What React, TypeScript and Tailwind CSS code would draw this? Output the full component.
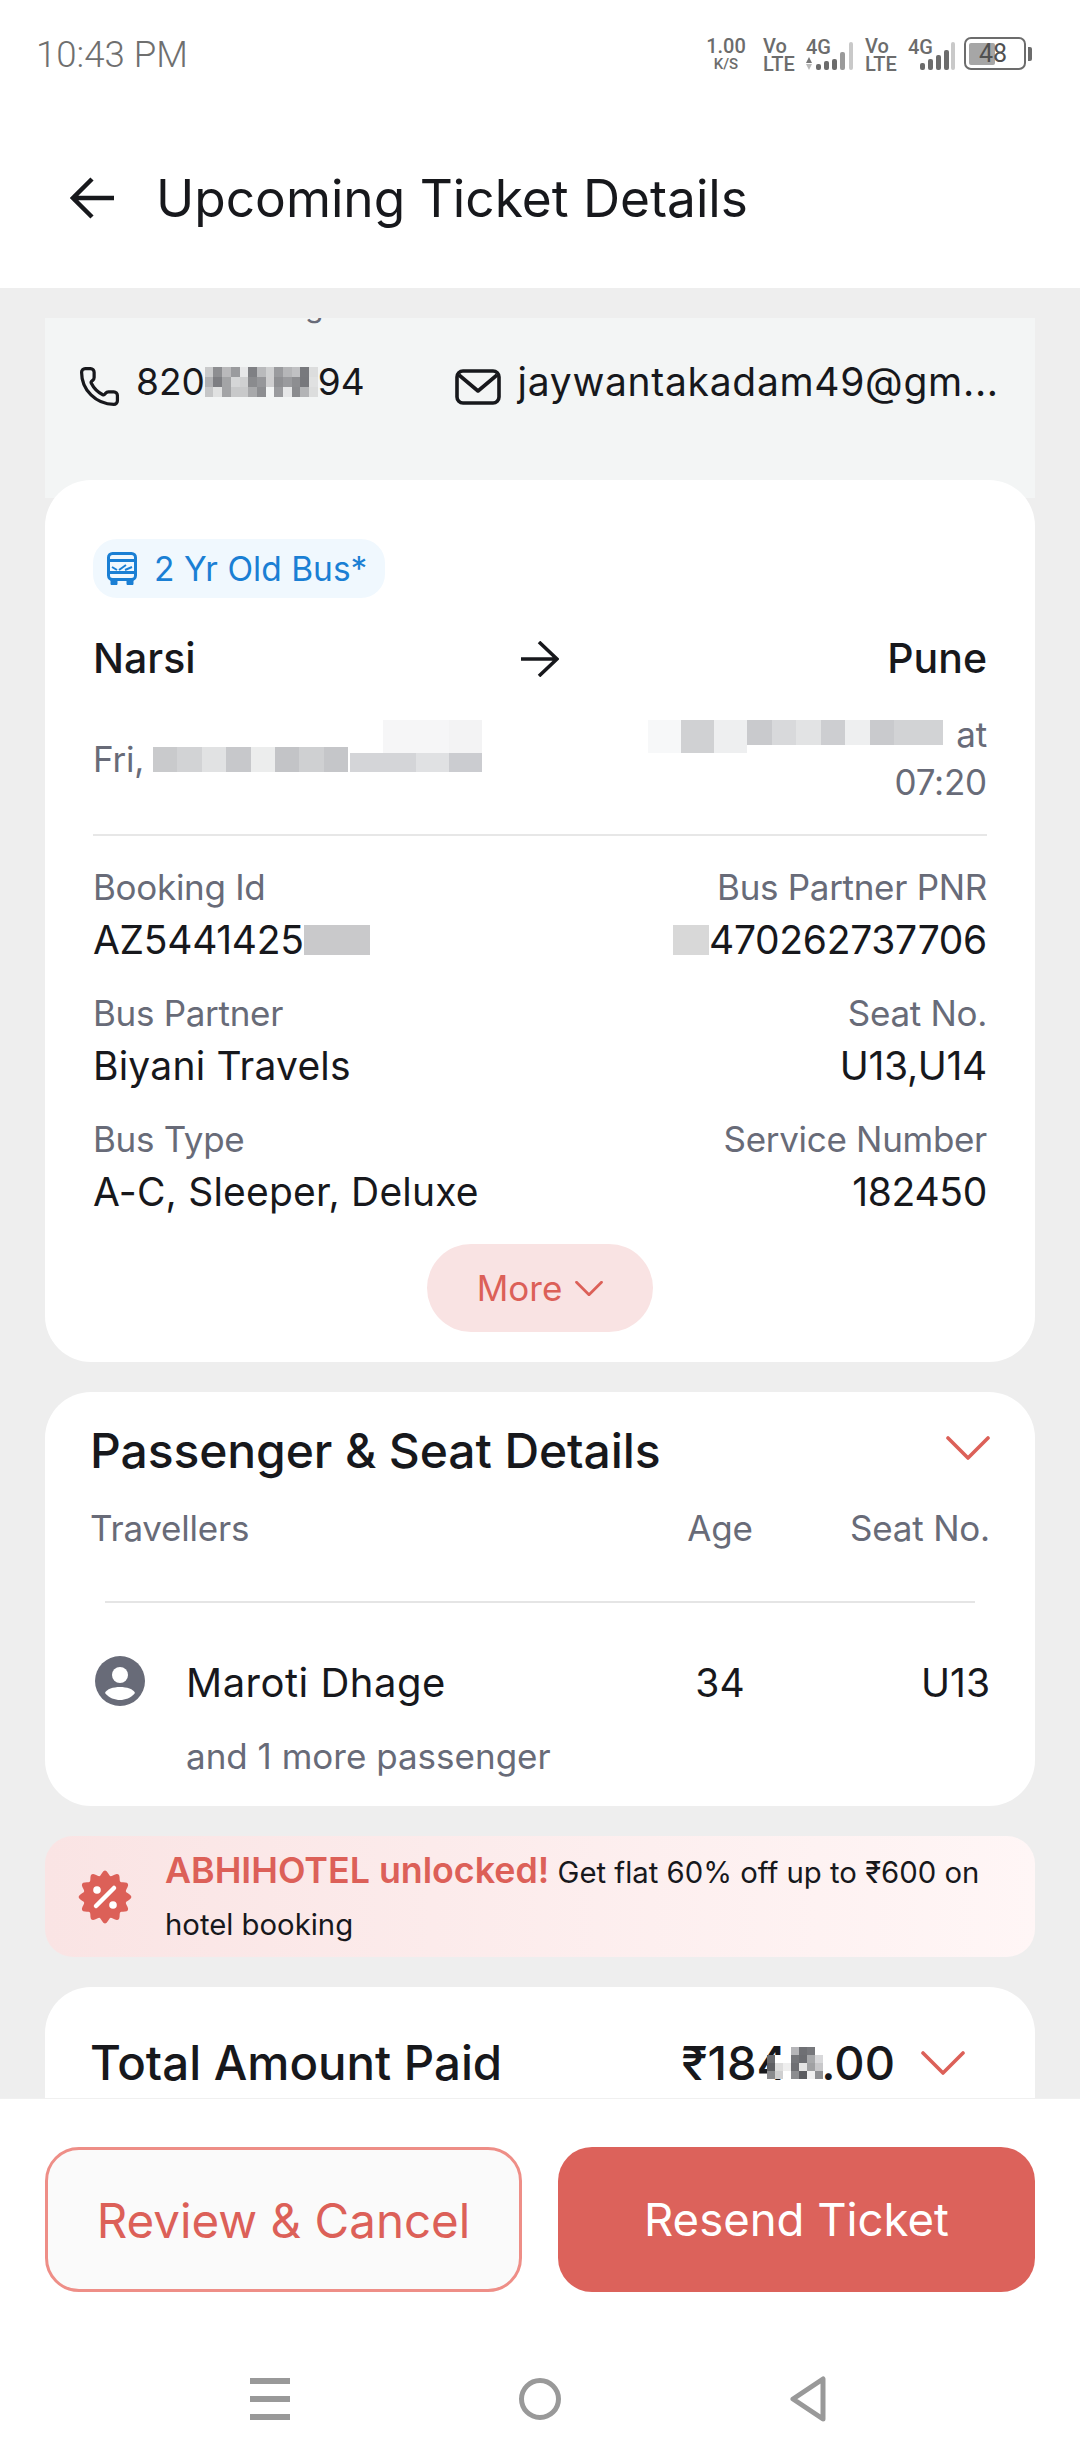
import React from "react";
import { Phone } from "lucide-react";

const F = "[font-family:Inter,'Noto_Sans',sans-serif]";

function Mosaic({ colors, rows, w, h }: { colors: string[]; rows: number; w: number; h: number }) {
  return (
    <span className="grid shrink-0" style={{ gridTemplateColumns: `repeat(${colors.length / rows}, ${w}px)` }}>
      {colors.map((c, i) => (
        <span key={i} style={{ backgroundColor: c, height: h }} />
      ))}
    </span>
  );
}

function Info({ label, value, right, extra, tight }: { label: string; value: React.ReactNode; right?: boolean; extra?: React.ReactNode; tight?: boolean }) {
  return (
    <div className={right ? "flex flex-col items-end" : "flex flex-col"}>
      <div className="h-[52px] text-[35px] leading-[50px] text-[#686b78] tracking-[-0.3px]">{label}</div>
      <div className={`h-[52px] text-[39px] leading-[52px] text-[#17181c] flex items-center ${tight ? "tracking-[-0.3px]" : "tracking-[0.2px]"}`}>
        {extra}
        {value}
      </div>
    </div>
  );
}

function Chevron({ className, sw = 3.6 }: { className: string; sw?: number }) {
  return (
    <svg viewBox="0 0 44 24" className={className} fill="none" stroke="#dc6058" strokeWidth={sw} strokeLinecap="round" strokeLinejoin="round">
      <path d="M2 2 L22 22 L42 2" />
    </svg>
  );
}

function scallop(): string {
  const pts: string[] = [];
  for (let i = 0; i < 120; i++) {
    const t = (i / 120) * Math.PI * 2;
    const r = 24 + 2.4 * Math.cos(12 * t);
    pts.push(`${(27 + r * Math.sin(t)).toFixed(2)} ${(27 - r * Math.cos(t)).toFixed(2)}`);
  }
  return "M" + pts.join(" L") + " Z";
}

function Signal({ first }: { first?: boolean }) {
  const bars = first ? [6, 9, 11, 18] : [7, 11, 15, 20];
  return (
    <div className="w-[47px] h-[33px] relative">
      <span className="absolute left-0 top-0 text-[20px] leading-[20px]">4G</span>
      {first && (
        <span className="absolute left-0 bottom-0 flex flex-col items-center gap-[1px]">
          <span className="w-0 h-0 border-x-[3.5px] border-x-transparent border-b-[6px] border-b-[#777]" />
          <span className="w-0 h-0 border-x-[3.5px] border-x-transparent border-t-[6px] border-t-[#bbb]" />
        </span>
      )}
      <div className={`absolute bottom-0 flex items-end gap-[3.5px] ${first ? "left-[10px]" : "left-[12px]"}`}>
        {bars.map((h, i) => (
          <span key={i} className={`w-[4.5px] rounded-[2px] ${first && i === 3 ? "bg-[#9a9a9a]" : "bg-[#6c6c6c]"}`} style={{ height: h }} />
        ))}
      </div>
      <span className="absolute right-0 bottom-0 w-[4.5px] h-[28px] rounded-[2px] bg-[#c9c9c9]" />
    </div>
  );
}

const phoneBlur = [
  "#c9cacb","#8d8e91","#b9b9bb","#9a9b9e","#e6e7e8","#7f8084","#b9babc","#cfd0d1","#9a9b9e","#b5b6b8","#c0c1c3","#78797d","#dcdddd",
  "#b0b1b3","#7d7e82","#a3a4a6","#d5d6d7","#cfd0d1","#8a8b8e","#96979a","#cfcfd0","#8f9093","#9a9b9e","#8d8e91","#77787c","#e0e1e1",
  "#c5c6c7","#e0e1e1","#a3a4a6","#c8c9ca","#c8c9ca","#a8a9ab","#8d8e91","#f3f5f5","#9a9b9e","#e6e7e8","#8a8b8e","#b3b4b6","#dcdddd",
];

const totalBlur = [
  "transparent","transparent","transparent","#b5b5b8","#6f7074","#77787c","#ffffff",
  "#6a6b6f","#ffffff","#ffffff","#75767a","#6c6d71","#a8a9ab","#d8d8da",
  "#5e5f63","#dddddd","#eeeeee","#6e6f73","#e4e4e4","#a0a1a3","#c8c8ca",
  "#8a8b8e","#cfcfd0","#ffffff","#8c8d90","#5b5c60","#f0f0f0","#8f9093",
];

export default function App() {
  return (
    <div className={`w-[1080px] h-[2460px] flex flex-col bg-white overflow-hidden ${F}`}>
      {/* status bar */}
      <div className="h-[110px] flex items-start justify-between pl-[36px] pr-[48px] shrink-0">
        <div className="mt-[33px] text-[36.6px] leading-[44px] text-[#6f6f6f] font-['Roboto'] font-light">10:43 PM</div>
        <div className="mt-[37px] flex items-start text-[#6c6c6c] font-['Roboto'] font-medium">
          <div className="flex flex-col items-center w-[40px]">
            <span className="text-[20px] leading-[18px]">1.00</span>
            <span className="mt-[2px] text-[15px] leading-[15px]">K/S</span>
          </div>
          <div className="ml-[17px] w-[30px] flex flex-col text-[20px] leading-[18px]"><span>Vo</span><span>LTE</span></div>
          <div className="ml-[13px]"><Signal first /></div>
          <div className="ml-[12px] w-[30px] flex flex-col text-[20px] leading-[18px]"><span>Vo</span><span>LTE</span></div>
          <div className="ml-[13px]"><Signal /></div>
          <div className="flex items-center ml-[9px]">
            <div className="w-[62px] h-[33px] rounded-[7px] border-[2.5px] border-[#6c6c6c] flex items-center p-[3px] relative">
              <div className="w-[26px] h-[22px] bg-[#a6a6a6] rounded-[2px]" />
              <span className="absolute left-[13px] text-[25px] leading-[26px] font-normal text-[#505050]">48</span>
            </div>
            <div className="w-[4px] h-[14px] bg-[#6c6c6c] ml-[2px] rounded-r-[2px]" />
          </div>
        </div>
      </div>

      {/* header */}
      <div className="h-[178px] shrink-0 flex items-center pl-[70px] pb-[2px]">
        <svg viewBox="0 0 46 42" className="w-[46px] h-[42px]" fill="none" stroke="#17181c" strokeWidth="4.5">
          <path d="M44 21 H4 M22 2 L3 21 L22 40" />
        </svg>
        <div className="ml-[40px] text-[51.4px] leading-[60px] text-[#17181c]">Upcoming Ticket Details</div>
      </div>

      {/* scroll area */}
      <div className="flex-1 min-h-0 overflow-hidden bg-[#eeeeee] px-[45px] pt-[30px]">
        <div className="bg-[#f3f5f5] h-[180px] overflow-hidden">
          <div className="h-[8px] overflow-hidden relative">
            <span className="absolute left-[260px] top-[-27px] text-[30px] leading-[30px] text-[#686b78]">g</span>
          </div>
          <div className="flex items-center mt-[31px] h-[50px] pl-[33px]">
            <Phone className="w-[43px] h-[43px] mt-[8px] text-[#17181c]" strokeWidth={1.8} />
            <span className="ml-[15px] text-[37px] leading-[50px] text-[#17181c] flex items-center">
              820
              <Mosaic colors={phoneBlur} rows={3} w={8.7} h={10} />
              94
            </span>
            <svg viewBox="0 0 46 36" className="w-[46px] h-[36px] ml-[90px] mt-[9px]" fill="none" stroke="#17181c" strokeWidth="3.6" strokeLinejoin="round">
              <rect x="2" y="2" width="42" height="32" rx="6" />
              <path d="M4 6 L23 22 L42 6" />
            </svg>
            <span className="ml-[17px] text-[39px] leading-[50px] text-[#17181c] tracking-[0.7px]">jaywantakadam49@gm...</span>
          </div>
        </div>

        {/* trip card */}
        <div className="bg-white rounded-[46px] h-[882px] -mt-[18px] px-[48px] pt-[59px]">
          <div className="flex w-[292px] items-center h-[59px] rounded-[24px] bg-[#f0f8fe] pl-[14px]">
            <svg viewBox="0 0 30 34" className="w-[30px] h-[34px] shrink-0" fill="none" stroke="#1a7fd4" strokeWidth="3" strokeLinejoin="round">
              <rect x="1.5" y="1.5" width="27" height="26" rx="4" />
              <path d="M1.5 8.5 H28.5 M1.5 20.5 H28.5" />
              <path d="M5 15 L10 18 M12 18 L19 13 M18 18 L25 15" strokeWidth="2" />
              <path d="M4 28 V32.5 H10 V28 M20 28 V32.5 H26 V28" fill="#1a7fd4" strokeWidth="1" />
            </svg>
            <span className="ml-[17px] text-[33.5px] leading-[44px] text-[#1a7fd4] tracking-[0.02px] whitespace-nowrap">2 Yr Old Bus*</span>
          </div>
          <div className="grid grid-cols-3 items-center mt-[30px] h-[50px]">
            <span className="text-[41px] font-medium text-[#17181c]">Narsi</span>
            <span className="flex justify-center">
              <svg viewBox="0 0 38 36" className="w-[38px] h-[36px]" fill="none" stroke="#17181c" strokeWidth="3.6">
                <path d="M0 18 H36 M18 1 L36 18 L18 35" />
              </svg>
            </span>
            <span className="text-right text-[41px] font-medium text-[#17181c]">Pune</span>
          </div>
          <div className="flex justify-between h-[158px] text-[35px] leading-[48px] text-[#686b78] border-b-2 border-[#e7e7e7] tracking-[-0.2px]">
            <div className="relative pt-[57px]">
              <span>Fri,</span>
              <span className="absolute left-[60px] top-[69px] flex">
                <Mosaic rows={1} w={24.4} h={25} colors={["#c9cacc","#d2d3d5","#e1e2e3","#c7c8cb","#eceded","#c3c4c7","#cfd0d2","#c5c6c9"]} />
              </span>
              <span className="absolute left-[257px] top-[75px] flex">
                <Mosaic rows={1} w={33} h={19} colors={["#d4d5d8","#d4d5d8","#e0e1e3","#cbccd0"]} />
              </span>
              <span className="absolute left-[290px] top-[42px] flex">
                <Mosaic rows={1} w={33} h={33} colors={["#f6f6f7","#f6f6f7","#f3f3f4"]} />
              </span>
            </div>
            <div className="flex flex-col items-end pt-[32px]">
              <div className="flex items-start">
                <span className="flex items-start mt-[10px]">
                  <Mosaic rows={1} w={33} h={33} colors={["#f7f8f9","#d0d1d3","#eeeff0"]} />
                  <Mosaic rows={1} w={24.5} h={25} colors={["#c9cacd","#d8d9db","#e2e3e4","#cdced1","#eeeff0","#c9cacd","#d2d3d5","#d2d3d5"]} />
                </span>
                <span className="ml-[13px]">at</span>
              </div>
              <span>07:20</span>
            </div>
          </div>
          <div className="grid grid-cols-2 gap-y-[22px] mt-[26px]">
            <Info tight label="Booking Id" value={<span className="flex items-center">AZ5441425<span className="inline-block w-[66px] h-[30px] bg-[#c9c9cb]" /></span>} />
            <Info tight right label="Bus Partner PNR" value="470262737706" extra={<span className="inline-block w-[36px] h-[30px] bg-[#d8d8d8]" />} />
            <Info label="Bus Partner" value="Biyani Travels" />
            <Info tight right label="Seat No." value="U13,U14" />
            <Info label="Bus Type" value="A-C, Sleeper, Deluxe" />
            <Info tight right label="Service Number" value="182450" />
          </div>
          <div className="flex justify-center mt-[26px]">
            <div className="w-[226px] h-[88px] rounded-[44px] bg-[#f9e3e3] flex items-center justify-center gap-[13px]">
              <span className="text-[35px] text-[#dc6058]">More</span>
              <Chevron className="w-[28px] h-[15px]" sw={4.4} />
            </div>
          </div>
        </div>

        {/* passenger card */}
        <div className="bg-white rounded-[46px] h-[414px] mt-[30px] px-[45px] pt-[31px]">
          <div className="flex items-center justify-between h-[56px]">
            <span className="text-[48px] font-medium text-[#17181c] whitespace-nowrap tracking-[-0.1px]">Passenger &amp; Seat Details</span>
            <Chevron className="w-[44px] h-[24px] -mt-[6px]" />
          </div>
          <div className="flex items-center h-[50px] mt-[24px] text-[35px] text-[#686b78] tracking-[-0.2px]">
            <span className="flex-1">Travellers</span>
            <span className="w-[66px] text-center">Age</span>
            <span className="w-[237px] text-right">Seat No.</span>
          </div>
          <div className="h-[2px] bg-[#e5e5e5] mx-[15px] mt-[48px]" />
          <div className="flex items-center h-[50px] mt-[55px] text-[39px] text-[#17181c]">
            <svg viewBox="0 0 50 50" className="w-[50px] h-[50px] ml-[5px] -mt-[4px]">
              <circle cx="25" cy="25" r="25" fill="#686b78" />
              <circle cx="25" cy="19" r="8" fill="#fff" />
              <path d="M10 37 C13 29 37 29 40 37 C36 42 30 44 25 44 C20 44 14 42 10 37 Z" fill="#fff" />
            </svg>
            <span className="flex-1 ml-[41px] text-[40px] tracking-[0.5px]">Maroti Dhage</span>
            <span className="w-[66px] text-center">34</span>
            <span className="w-[237px] text-right">U13</span>
          </div>
          <div className="ml-[96px] mt-[23px] text-[35px] leading-[50px] text-[#686b78]">and 1 more passenger</div>
        </div>

        {/* banner */}
        <div className="h-[121px] mt-[30px] rounded-[28px] bg-gradient-to-r from-[#fae4e4] to-[#fff6f6] flex items-center pl-[33px] pr-[30px]">
          <svg viewBox="0 0 54 54" className="w-[54px] h-[54px] shrink-0">
            <path fill="#dc6058" d={scallop()} />
            <path stroke="#fff" strokeWidth="4.5" strokeLinecap="round" d="M36 18 L18 36" />
            <circle cx="19" cy="20" r="3.8" fill="#fff" />
            <circle cx="35" cy="35" r="3.8" fill="#fff" />
          </svg>
          <div className="ml-[33px] pt-[1px] text-[29.3px] leading-[52px] text-[#17181c]">
            <span className="text-[35.8px] font-semibold text-[#dc6058]">ABHIHOTEL unlocked!</span> Get flat 60% off up to ₹600 on hotel booking
          </div>
        </div>

        {/* total card */}
        <div className="bg-white rounded-t-[46px] h-[140px] mt-[30px] pl-[45px] pr-[70px] pt-[48px]">
          <div className="flex items-center h-[56px]">
            <span className="flex-1 text-[47.4px] font-medium text-[#17181c]">Total Amount Paid</span>
            <span className="text-[47px] font-medium text-[#17181c] flex items-center">
              ₹184
              <span className="relative -ml-[20px] -mr-[2px] flex">
                <Mosaic colors={totalBlur} rows={4} w={8} h={8} />
              </span>
              .00
            </span>
            <Chevron className="w-[44px] h-[24px] ml-[26px]" />
          </div>
        </div>
      </div>

      {/* bottom */}
      <div className="h-[362px] shrink-0 bg-white border-t border-[#f0f0f0] relative z-10 flex flex-col px-[45px] pt-[48px]">
        <div className="flex justify-between">
          <div className="w-[477px] h-[145px] rounded-[34px] border-[3px] border-[#ee8e87] bg-[#fafafa] flex items-center justify-center text-[47.5px] text-[#dc6058] pt-[2px]">Review &amp; Cancel</div>
          <div className="w-[477px] h-[145px] rounded-[34px] bg-[#dc625b] flex items-center justify-center text-[45.5px] text-white pt-[2px]">Resend Ticket</div>
        </div>
        <div className="flex items-center justify-center gap-[190px] mt-[84px] h-[46px]">
          <div className="w-[80px] flex justify-center">
            <div className="w-[40px] flex flex-col gap-[12px]">
              <span className="h-[6px] bg-[#999]" /><span className="h-[6px] bg-[#999]" /><span className="h-[6px] bg-[#999]" />
            </div>
          </div>
          <div className="w-[80px] flex justify-center">
            <div className="w-[42px] h-[42px] rounded-full border-[5px] border-[#999]" />
          </div>
          <div className="w-[80px] flex justify-center">
            <svg viewBox="0 0 36 46" className="w-[36px] h-[46px] -ml-[4px]" fill="none" stroke="#999" strokeWidth="5" strokeLinejoin="round">
              <path d="M33 3 V43 L3 23 Z" />
            </svg>
          </div>
        </div>
      </div>
    </div>
  );
}
